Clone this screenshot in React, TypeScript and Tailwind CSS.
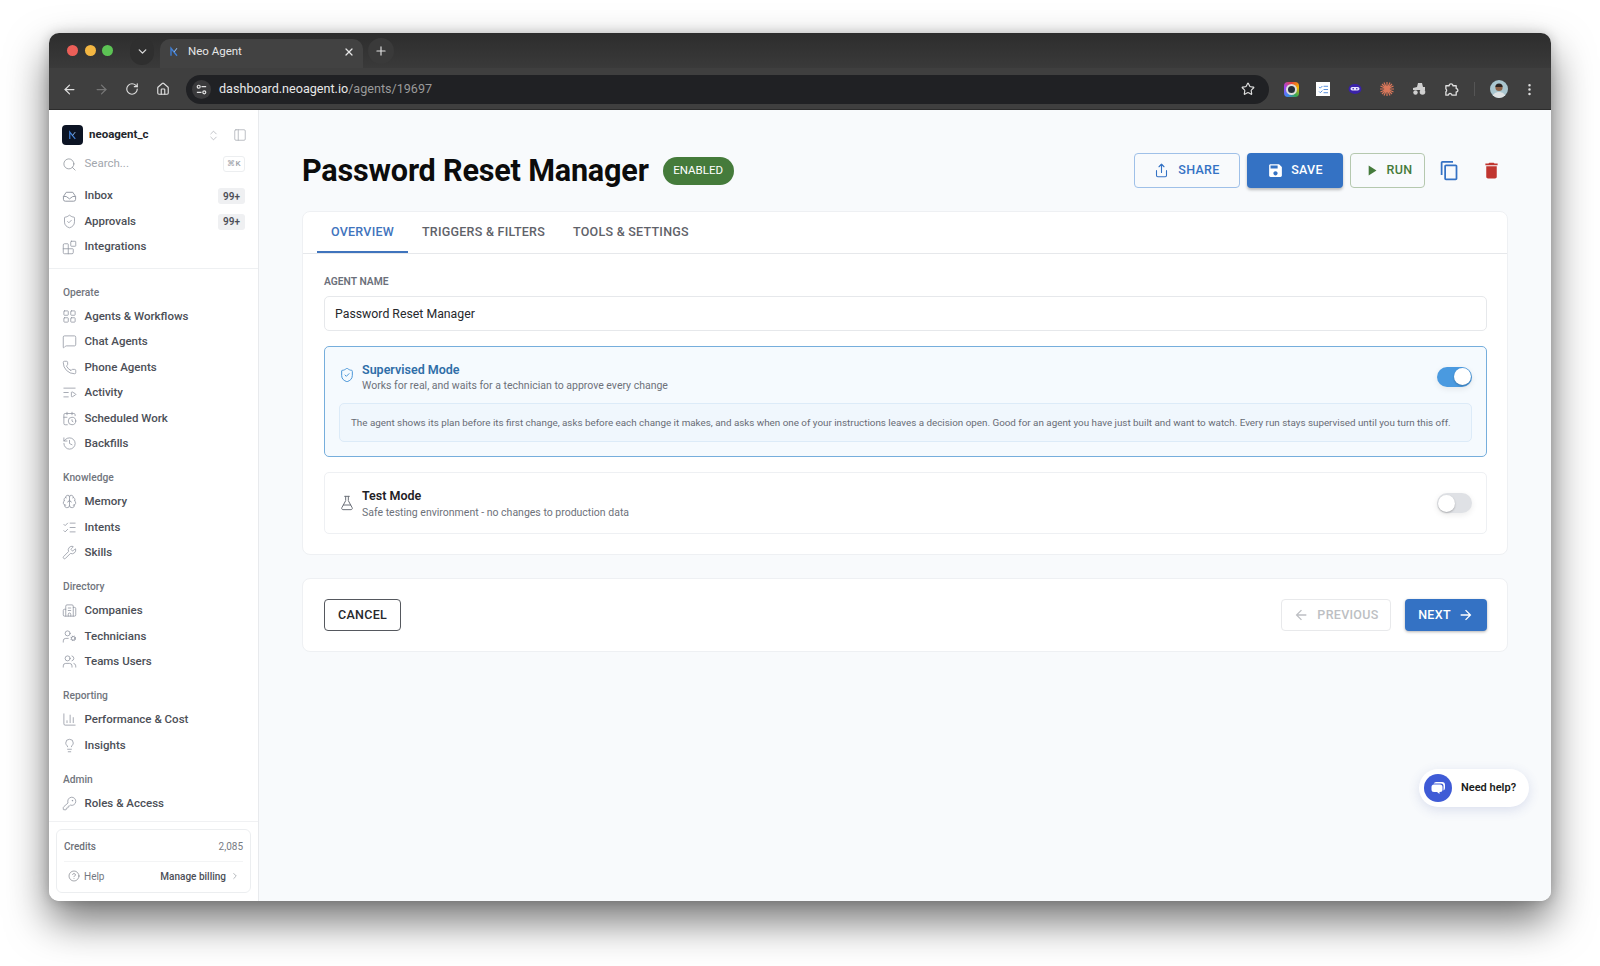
import type { ComponentType } from "react";
import {
  ArrowLeft,
  ArrowRight,
  BarChart3,
  Blocks,
  Brain,
  Building2,
  CalendarClock,
  ChevronDown,
  ChevronRight,
  ChevronsUpDown,
  CircleHelp,
  EllipsisVertical,
  FlaskConical,
  History,
  House,
  KeyRound,
  LayoutGrid,
  Lightbulb,
  ListChecks,
  ListVideo,
  MessageSquare,
  PanelLeft,
  Phone,
  Plus,
  RotateCw,
  Search,
  Share,
  ShieldCheck,
  Star,
  UserCog,
  Users,
  Wrench,
  X,
} from "lucide-react";

type IconType = ComponentType<{ className?: string; strokeWidth?: number }>;

const sections: { label: string; items: { name: string; icon: IconType }[] }[] = [
  {
    label: "Operate",
    items: [
      { name: "Agents & Workflows", icon: LayoutGrid },
      { name: "Chat Agents", icon: MessageSquare },
      { name: "Phone Agents", icon: Phone },
      { name: "Activity", icon: ListVideo },
      { name: "Scheduled Work", icon: CalendarClock },
      { name: "Backfills", icon: History },
    ],
  },
  {
    label: "Knowledge",
    items: [
      { name: "Memory", icon: Brain },
      { name: "Intents", icon: ListChecks },
      { name: "Skills", icon: Wrench },
    ],
  },
  {
    label: "Directory",
    items: [
      { name: "Companies", icon: Building2 },
      { name: "Technicians", icon: UserCog },
      { name: "Teams Users", icon: Users },
    ],
  },
  {
    label: "Reporting",
    items: [
      { name: "Performance & Cost", icon: BarChart3 },
      { name: "Insights", icon: Lightbulb },
    ],
  },
  {
    label: "Admin",
    items: [{ name: "Roles & Access", icon: KeyRound }],
  },
];

const InboxIcon: IconType = ({ className }) => (
  <svg viewBox="0 0 16 16" fill="none" stroke="currentColor" strokeWidth="1" className={className}>
    <path d="M1.500 8 4.500 3.500h7L14.500 8v3a2 2 0 0 1-2 2h-9a2 2 0 0 1-2-2z" strokeLinejoin="round" />
    <path d="M1.500 8h3l3.500 2.500L11.500 8h3" strokeLinejoin="round" />
  </svg>
);

const MuiIcon = ({ d, className }: { d: string; className: string }) => (
  <svg viewBox="0 0 24 24" fill="currentColor" className={className}>
    <path d={d} />
  </svg>
);

const NeoMark = ({ className }: { className: string }) => (
  <svg viewBox="0 0 16 16" fill="none" className={className}>
    <path d="M4 13V3l8 10" stroke="#3f7fd6" strokeWidth="1.8" />
    <path d="M8 8l4-5" stroke="#8fb8ea" strokeWidth="1.4" />
  </svg>
);

const NavRow = ({ name, icon: Icon, badge }: { name: string; icon: IconType; badge?: string }) => (
  <div className="flex h-[25.5px] items-center pl-[13px] pr-[13px]">
    <Icon className="h-[15px] w-[15px] shrink-0 text-[#9095a0]" strokeWidth={1.25} />
    <span className="ml-[7.5px] flex-1 text-[11.5px] font-medium text-[#4c4f57]">{name}</span>
    {badge && (
      <span className="flex h-[16px] w-[27px] items-center justify-center rounded-[3px] bg-[#eff0f2] text-[10px] font-semibold text-[#4c4f57]">
        {badge}
      </span>
    )}
  </div>
);

const Sidebar = () => (
  <aside className="flex w-[210px] shrink-0 flex-col border-r border-[#e8eaed] bg-white">
    <div className="mt-[15px] flex h-[20px] items-center pl-[13px] pr-[11px]">
      <div className="flex h-[20px] w-[21px] items-center justify-center rounded-[4px] bg-[#0c1424]">
        <NeoMark className="h-[11px] w-[11px]" />
      </div>
      <span className="ml-[6px] flex-1 text-[11.5px] font-bold text-[#23262c]">neoagent_c</span>
      <ChevronsUpDown className="mr-[13px] h-[13px] w-[13px] text-[#a4a8af]" strokeWidth={1.25} />
      <PanelLeft className="h-[14px] w-[14px] text-[#a4a8af]" strokeWidth={1.25} />
    </div>
    <div className="mt-[6.5px] flex h-[25px] items-center pl-[13px] pr-[13px]">
      <Search className="h-[15px] w-[15px] text-[#8d929a]" strokeWidth={1.25} />
      <span className="ml-[7.5px] flex-1 text-[11.5px] text-[#a2a6ad]">Search...</span>
      <span className="flex h-[16px] w-[22px] items-center justify-center rounded-[3px] border border-[#eceef0] text-[8px] font-medium text-[#9ea2a9]">
        ⌘K
      </span>
    </div>
    <div className="mt-[6.75px] border-b border-[#eef0f2] pb-[8.5px]">
      <NavRow name="Inbox" icon={InboxIcon} badge="99+" />
      <NavRow name="Approvals" icon={ShieldCheck} badge="99+" />
      <NavRow name="Integrations" icon={Blocks} />
    </div>
    <div className="flex flex-1 flex-col gap-[13.25px] pt-[15px]">
      {sections.map((section) => (
        <div key={section.label}>
          <div className="mb-[3.25px] flex h-[16px] items-center pl-[14px] text-[10.25px] font-medium text-[#71757d]">
            {section.label}
          </div>
          {section.items.map((item) => (
            <NavRow key={item.name} name={item.name} icon={item.icon} />
          ))}
        </div>
      ))}
    </div>
    <div className="border-t border-[#f0f1f3] px-[7px] pb-[8px] pt-[7px]">
      <div className="h-[64px] rounded-[6px] border border-[#eceef0] px-[7px]">
        <div className="flex h-[32px] items-center justify-between border-b border-[#f3f4f5] pt-[1px] text-[10px]">
          <span className="font-medium text-[#6c7078]">Credits</span>
          <span className="text-[#777b83]">2,085</span>
        </div>
        <div className="flex h-[30px] items-center pb-[2px] pl-[4px] text-[10px]">
          <CircleHelp className="h-[12px] w-[12px] text-[#73777f]" strokeWidth={1.25} />
          <span className="ml-[4px] flex-1 text-[#73777f]">Help</span>
          <span className="font-medium text-[#4c4f57]">Manage billing</span>
          <ChevronRight className="ml-[4px] mr-[3px] h-[10px] w-[10px] text-[#a4a8af]" />
        </div>
      </div>
    </div>
  </aside>
);

const Toggle = ({ on }: { on: boolean }) => (
  <div
    className={`flex h-[20px] w-[35px] items-center rounded-full p-[1px] shadow-[0_2px_6px_rgba(0,0,0,0.08)] ${
      on ? "justify-end bg-[#4a9ae0]" : "justify-start bg-[#dfe1e5]"
    }`}
  >
    <div className="h-[17px] w-[17px] rounded-full bg-white shadow-[0_1px_2px_rgba(0,0,0,0.25)]" />
  </div>
);

const Chrome = () => (
  <div className="shrink-0">
    <div className="flex h-[35px] items-end bg-linear-to-b from-[#2d2d2d] to-[#3a3a3a]">
      <div className="flex h-[35px] items-center">
        <span className="ml-[18px] h-[11px] w-[11px] rounded-full bg-[#ec5f58]" />
        <span className="ml-[6.5px] h-[11px] w-[11px] rounded-full bg-[#f3b642]" />
        <span className="ml-[6.5px] h-[11px] w-[11px] rounded-full bg-[#5cc354]" />
      </div>
      <div className="mb-[3px] ml-[17px] flex h-[27px] w-[24px] items-center justify-center rounded-full bg-[#2f2f2f]">
        <ChevronDown className="h-[13px] w-[13px] text-[#d8d8d8]" strokeWidth={2.5} />
      </div>
      <div className="ml-[6px] flex h-[29px] w-[203px] items-center rounded-t-[10px] bg-[#424242] pb-[4px] pl-[8px] pr-[8px]">
        <NeoMark className="h-[12px] w-[12px]" />
        <span className="ml-[8px] flex-1 text-[11.5px] text-[#e6e6e6]">Neo Agent</span>
        <X className="h-[12px] w-[12px] text-[#e6e6e6]" strokeWidth={2.5} />
      </div>
      <div className="mb-[4px] ml-[5px] flex h-[26px] w-[26px] items-center justify-center rounded-full bg-[#3a3a3a]">
        <Plus className="h-[14px] w-[14px] text-[#e0e0e0]" strokeWidth={2} />
      </div>
    </div>
    <div className="flex h-[42px] items-center border-b border-[#2c2c2c] bg-[#3f3f3f] pt-[1px]">
      <ArrowLeft className="ml-[13px] h-[15px] w-[15px] text-[#dedede]" />
      <ArrowRight className="ml-[17px] h-[15px] w-[15px] text-[#767676]" />
      <RotateCw className="ml-[16px] h-[14px] w-[14px] text-[#dedede]" />
      <House className="ml-[17px] h-[14px] w-[14px] text-[#dedede]" />
      <div className="ml-[16px] flex h-[29px] w-[1083px] items-center rounded-full bg-[#202124] pl-[6px] pr-[14px]">
        <div className="flex h-[19px] w-[19px] items-center justify-center rounded-full bg-[#3a3a3c]">
          <svg viewBox="0 0 14 14" fill="none" stroke="#e3e3e3" strokeWidth="1.3" className="h-[13px] w-[13px]">
            <circle cx="4" cy="4" r="1.600" />
            <path d="M7 4h5M2 10h5" />
            <circle cx="10" cy="10" r="1.600" />
          </svg>
        </div>
        <span className="ml-[8px] flex-1 pt-[1px] text-[12.6px] text-[#e8e8e8]">
          dashboard.neoagent.io<span className="text-[#9a9a9a]">/agents/19697</span>
        </span>
        <Star className="h-[14px] w-[14px] text-[#dedede]" strokeWidth={2} />
      </div>
      <div className="ml-[15px] flex h-[15px] w-[15px] items-center justify-center rounded-[4px] bg-[conic-gradient(#e8453c,#f4b400,#34a853,#4285f4,#a142f4,#e8453c)]">
        <div className="h-[11px] w-[11px] rounded-full border-[2px] border-[#ddd] bg-[#26303a]" />
      </div>
      <div className="ml-[17px] flex h-[14px] w-[14px] items-center justify-center bg-white">
        <ListChecks className="h-[11px] w-[11px] text-[#4a86d8]" strokeWidth={2} />
      </div>
      <svg viewBox="0 0 14 14" className="ml-[18px] h-[14px] w-[14px]">
        <ellipse cx="7" cy="7" rx="6.500" ry="5" fill="#3a22a8" />
        <rect x="2.500" y="5" width="9" height="3.500" rx="1.750" fill="#e8e4ff" />
        <circle cx="5.200" cy="6.700" r="0.800" fill="#3a22a8" />
        <circle cx="8.800" cy="6.700" r="0.800" fill="#3a22a8" />
      </svg>
      <svg viewBox="0 0 14 14" stroke="#d9775a" strokeWidth="1.2" className="ml-[18px] h-[14px] w-[14px]">
        <path d="M7 0v14M0 7h14M2 2l10 10M12 2L2 12M4 .5l6 13M10 .5l-6 13M.5 4l13 6M.5 10l13-6" />
      </svg>
      <svg viewBox="0 0 14 14" fill="#cfcfcf" className="ml-[18px] h-[14px] w-[14px]">
        <path d="M6 1h4l1 4h2v3H1V6l4-1z" />
        <circle cx="3.500" cy="10.500" r="2.200" />
        <circle cx="10.500" cy="10" r="2.800" />
      </svg>
      <svg viewBox="0 0 16 16" fill="none" stroke="#dedede" strokeWidth="1.4" strokeLinejoin="round" className="ml-[18px] h-[15px] w-[15px]">
        <path d="M2 4h3.500a2 2 0 0 1 4 0H13v3a1.800 1.800 0 0 1 0 3.600V14H8.500a2 2 0 0 0-3.500-1 2 2 0 0 0-.5 1H2v-3.500a1.800 1.800 0 0 0 0-3z" />
      </svg>
      <div className="ml-[15px] h-[14px] w-px bg-[#555]" />
      <svg viewBox="0 0 18 18" className="ml-[15px] h-[18px] w-[18px] rounded-full">
        <rect width="18" height="18" fill="#a9c6cf" />
        <circle cx="9" cy="7.500" r="3.600" fill="#8b6248" />
        <path d="M5.400 7a3.600 3.600 0 0 1 7.200 0z" fill="#2a2320" />
        <path d="M2 18c.5-4 3.500-6 7-6s6.500 2 7 6z" fill="#dfe3e4" />
      </svg>
      <EllipsisVertical className="ml-[14px] h-[15px] w-[15px] text-[#dedede]" strokeWidth={2} />
    </div>
  </div>
);

export default function App() {
  return (
    <div className="min-h-[966px] bg-white pl-[49px] pt-[33px] font-['Roboto',sans-serif]">
      <div className="flex h-[868px] w-[1502px] flex-col overflow-hidden rounded-[10px] bg-white shadow-[0_20px_42px_rgba(0,0,0,0.55),0_0_12px_rgba(0,0,0,0.18)]">
        <Chrome />
        <div className="flex min-h-0 flex-1">
          <Sidebar />
          <main className="relative flex-1 bg-[#f8fafc] pl-[43px] pr-[43px] pt-[43px]">
            <div className="flex h-[35px] items-center">
              <h1 className="text-[30.6px] font-bold tracking-[-0.2px] text-[#0c0c0c]">Password Reset Manager</h1>
              <span className="ml-[14px] flex h-[28px] w-[71px] items-center justify-center rounded-full bg-[#457b3b] text-[11.5px] text-white">
                ENABLED
              </span>
              <div className="ml-auto flex items-center">
                <button className="flex h-[35px] w-[106px] items-center justify-center gap-[9px] rounded-[4px] border border-[#9fc0e8] text-[12.5px] font-medium tracking-[0.3px] text-[#3472c4]">
                  <Share className="h-[15px] w-[15px]" strokeWidth={1.75} />
                  SHARE
                </button>
                <button className="ml-[7px] flex h-[35px] w-[96px] items-center justify-center gap-[7px] rounded-[4px] bg-[#3472c4] text-[12.5px] font-medium tracking-[0.3px] text-white shadow-[0_2px_3px_rgba(0,0,0,0.25)]">
                  <MuiIcon
                    className="h-[17px] w-[17px]"
                    d="M17 3H5c-1.110 0-2 .9-2 2v14c0 1.100.89 2 2 2h14c1.100 0 2-.9 2-2V7l-4-4zm-5 16c-1.660 0-3-1.340-3-3s1.340-3 3-3 3 1.340 3 3-1.340 3-3 3zm3-10H5V5h10v4z"
                  />
                  SAVE
                </button>
                <button className="ml-[7px] flex h-[35px] w-[75px] items-center justify-center gap-[7px] rounded-[4px] border border-[#b5c8ae] text-[12.5px] font-medium tracking-[0.3px] text-[#457b3b]">
                  <MuiIcon className="h-[17px] w-[17px]" d="M8 5v14l11-7z" />
                  RUN
                </button>
                <MuiIcon
                  className="ml-[14px] h-[21px] w-[21px] text-[#3472c4]"
                  d="M16 1H4c-1.100 0-2 .9-2 2v14h2V3h12V1zm3 4H8c-1.100 0-2 .9-2 2v14c0 1.100.9 2 2 2h11c1.100 0 2-.9 2-2V7c0-1.100-.9-2-2-2zm0 16H8V7h11v14z"
                />
                <MuiIcon
                  className="ml-[21px] mr-[6px] h-[21px] w-[21px] text-[#c0352f]"
                  d="M6 19c0 1.100.9 2 2 2h8c1.100 0 2-.9 2-2V7H6v12zM19 4h-3.500l-1-1h-5l-1 1H5v2h14V4z"
                />
              </div>
            </div>

            <section className="mt-[23px] h-[344px] rounded-[8px] border border-[#eef0f3] bg-white">
              <div className="flex h-[42px] border-b border-[#e6e8eb] pl-[14px] text-[12.5px] font-medium tracking-[0.25px]">
                <div className="flex w-[91px] items-center justify-center border-b-2 border-[#3f74bd] pt-[1px] text-[#3f74bd]">
                  OVERVIEW
                </div>
                <div className="ml-[14px] flex items-center text-[#5f6269]">TRIGGERS &amp; FILTERS</div>
                <div className="ml-[28px] flex items-center text-[#5f6269]">TOOLS &amp; SETTINGS</div>
              </div>
              <div className="pl-[21px] pr-[20px] pt-[21px]">
                <label className="block h-[14px] text-[10.3px] font-semibold leading-[14px] text-[#6b6f7a]">AGENT NAME</label>
                <div className="mt-[7px] flex h-[35px] items-center rounded-[5px] border border-[#e6e8eb] pl-[10px] pt-[1px] text-[12.3px] text-[#26282c]">
                  Password Reset Manager
                </div>

                <div className="mt-[15px] rounded-[5px] border border-[#76aedc] bg-[#f5fafe] p-[14px]">
                  <div className="flex h-[28px] items-center">
                    <ShieldCheck className="h-[16px] w-[16px] text-[#4a96d8]" strokeWidth={1.5} />
                    <div className="ml-[7px] flex-1 pt-[3px]">
                      <div className="text-[12.5px] font-semibold leading-[17px] text-[#2f6ea8]">Supervised Mode</div>
                      <div className="text-[10.5px] leading-[15px] text-[#6d717a]">
                        Works for real, and waits for a technician to approve every change
                      </div>
                    </div>
                    <div className="mt-[3px]">
                      <Toggle on />
                    </div>
                  </div>
                  <div className="mt-[14px] flex h-[39px] items-center rounded-[5px] border border-[#dcebf8] bg-[#f0f7fd] pl-[11px] pt-[1px] text-[9.83px] text-[#686c75]">
                    The agent shows its plan before its first change, asks before each change it makes, and asks when one of your instructions leaves a decision open. Good for an agent you have just built and want to watch. Every run stays supervised until you turn this off.
                  </div>
                </div>

                <div className="mt-[15px] flex h-[62px] items-center rounded-[5px] border border-[#eef0f3] px-[14px]">
                  <FlaskConical className="h-[16px] w-[16px] text-[#6d717a]" strokeWidth={1.5} />
                  <div className="ml-[7px] flex-1 pt-[2px]">
                    <div className="text-[12.5px] font-semibold leading-[16px] text-[#1f2125]">Test Mode</div>
                    <div className="text-[10.5px] leading-[17px] text-[#6d717a]">
                      Safe testing environment - no changes to production data
                    </div>
                  </div>
                  <Toggle on={false} />
                </div>
              </div>
            </section>

            <section className="mt-[23px] flex h-[74px] items-center rounded-[8px] border border-[#eef0f3] bg-white pl-[21px] pr-[20px]">
              <button className="h-[32px] w-[77px] rounded-[4px] border border-[#55585e] text-[12.5px] font-medium tracking-[0.3px] text-[#26282c]">
                CANCEL
              </button>
              <button className="ml-auto flex h-[32px] w-[110px] items-center justify-center gap-[8px] rounded-[4px] border border-[#e8e9eb] text-[12.5px] font-medium tracking-[0.3px] text-[#bdbfc3]">
                <MuiIcon className="h-[16px] w-[16px]" d="M20 11H7.830l5.590-5.590L12 4l-8 8 8 8 1.410-1.410L7.830 13H20v-2z" />
                PREVIOUS
              </button>
              <button className="ml-[14px] flex h-[32px] w-[82px] items-center justify-center gap-[7px] rounded-[4px] bg-[#3472c4] text-[12.5px] font-medium tracking-[0.3px] text-white shadow-[0_1px_3px_rgba(0,0,0,0.3)]">
                NEXT
                <MuiIcon className="h-[16px] w-[16px]" d="M12 4l-1.410 1.410L16.170 11H4v2h12.170l-5.580 5.590L12 20l8-8z" />
              </button>
            </section>

            <div className="absolute left-[1160px] top-[659px] flex h-[38px] w-[110px] items-center rounded-full bg-white pl-[5px] shadow-[0_3px_12px_rgba(60,80,160,0.16)]">
              <div className="flex h-[28px] w-[28px] items-center justify-center rounded-full bg-[#3f5bd6]">
                <svg viewBox="0 0 16 16" className="h-[16px] w-[16px]">
                  <path d="M6 2h6a3 3 0 0 1 3 3v3a3 3 0 0 1-1.500 2.600V6a2.500 2.500 0 0 0-2.500-2.500H3.600A3 3 0 0 1 6 2z" fill="white" />
                  <path d="M4 4.500h6A2.500 2.500 0 0 1 12.500 7v2.500A2.500 2.500 0 0 1 10 12H9.500v2l-2.500-2H4a2.500 2.500 0 0 1-2.500-2.500V7A2.500 2.500 0 0 1 4 4.500z" fill="white" />
                </svg>
              </div>
              <span className="ml-[9px] text-[11px] font-semibold text-[#1a1c20]">Need help?</span>
            </div>
          </main>
        </div>
      </div>
    </div>
  );
}
